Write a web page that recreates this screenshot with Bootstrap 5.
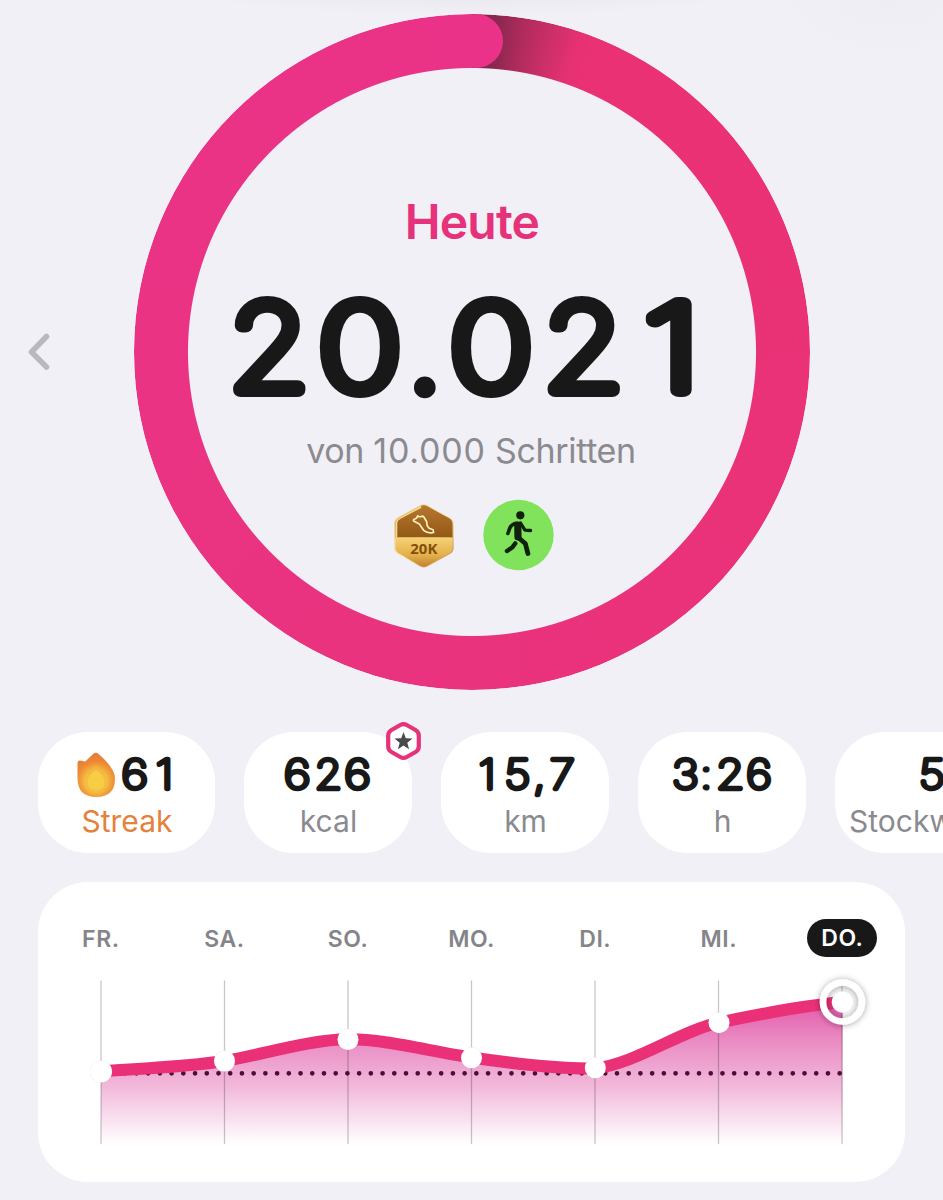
<!DOCTYPE html>
<html lang="de">
<head>
<meta charset="utf-8">
<meta name="viewport" content="width=device-width, initial-scale=1">
<title>Schritte</title>
<link href="https://cdn.jsdelivr.net/npm/bootstrap@5.3.0/dist/css/bootstrap.min.css" rel="stylesheet">
<style>
  body{background:#f1f0f6;font-family:Inter,"Liberation Sans",sans-serif;width:943px;height:1200px;overflow:hidden;color:#181818}
  svg{display:block;overflow:visible}
  .hero{height:718px;background:radial-gradient(ellipse 300px 28px at 470px -12px,rgba(0,0,0,.045),transparent),radial-gradient(ellipse 120px 60px at 890px 0,rgba(0,0,0,.012),transparent)}
  .prev{width:134px;padding-left:27px;padding-top:333px}
  .goal-ring{width:676px;height:676px;margin-top:14px}
  .ring-track{border-radius:50%;
    background:conic-gradient(#7d2449 0deg,#8f2852 5deg,#b02b5c 9deg,#cc2f68 14deg,#e63172 19deg,#ea3173 22deg,#ea3279 120deg,#ea3380 220deg,#ea3388 360deg);
    -webkit-mask:radial-gradient(circle,transparent 283.5px,#000 284.5px);mask:radial-gradient(circle,transparent 283.5px,#000 284.5px)}
  .ring-cap{width:54px;height:54px;left:315px;top:0;background:#ea3388}
  .today{font-size:48px;line-height:58px;font-weight:600;color:#e6327a;margin-top:179px;letter-spacing:-.8px}
  .goal-text{font-size:34px;line-height:42px;color:#8a8a8f;margin-top:26px;padding-right:2px;letter-spacing:-.35px}
  .goal-text span{letter-spacing:.8px}
  .awards{gap:28px;margin:28px 0 0 3px}
  .digits{fill:#181818;stroke:#181818;stroke-linejoin:round;stroke-linecap:round;font-family:Inter,sans-serif;font-weight:100}
  .dots{font-weight:200}
  .stats{gap:29px;padding-left:38px;padding-top:14px;overflow:hidden}
  .stat{width:168px;height:121px;border-radius:50px;background:#fff;flex:none}
  .stat-first{width:177px}
  .stat-label{font-size:30px;line-height:36px;color:#8a8a8f;margin-top:1px;padding-left:1px}
  .streak{color:#e4813a}
  .pin{left:141px;top:-10px}
  .week{width:867px;height:300px;border-radius:50px;background:#fff;margin:29px 0 0 38px;padding-top:37px}
  .day{width:123.6px;flex:none;text-align:center;font-size:23px;line-height:40px;font-weight:600;color:#858589;letter-spacing:.5px}
  .days{height:39px;padding-left:1px}
  .day-on{width:70px;height:38px;line-height:39px;margin:0 auto;background:#181818;color:#fff;border-radius:19px}
</style>
</head>
<body>
<header class="hero d-flex">
  <div class="prev">
    <svg width="24" height="38" viewBox="0 0 24 38"><path d="M19.500 3.500 4.500 19l15 15" fill="none" stroke="#b9b8be" stroke-width="5.500" stroke-linecap="round" stroke-linejoin="round"/></svg>
  </div>
  <div class="goal-ring position-relative d-flex flex-column align-items-center">
    <div class="ring-track position-absolute top-0 start-0 w-100 h-100"></div>
    <div class="ring-cap position-absolute rounded-circle"></div>
    <div class="today">Heute</div>
    <svg width="480" height="149" viewBox="232 255 480 149" class="mt-1">
      <g class="digits" font-size="118" stroke-width="14">
        <text y="390.300" x="208" transform="scale(1.1,1)">2</text>
        <text y="390.300" x="265" transform="scale(1.2,1)">0</text>
        <text y="391.200" x="408.500" class="dots" stroke-width="12.500">.</text>
        <text y="390.300" x="374.300" transform="scale(1.2,1)">0</text>
        <text y="390.300" x="493.900" transform="scale(1.1,1)">2</text>
        <text y="390.300" x="499.200" transform="scale(1.29,1)">1</text>
      </g>
    </svg>
    <div class="goal-text">von <span>10.000</span> Schritten</div>
    <div class="awards d-flex align-items-center">
      <svg width="62" height="64" viewBox="394 504 62 64">
        <defs>
          <linearGradient id="rim" x2="1" y2="1"><stop offset="0" stop-color="#e6b653"/><stop offset=".5" stop-color="#fff0ba"/><stop offset="1" stop-color="#bd792a"/></linearGradient>
          <linearGradient id="brown" x2="0" y2="1"><stop offset="0" stop-color="#b87932"/><stop offset="1" stop-color="#925815"/></linearGradient>
          <linearGradient id="gold" x2="0" y2="1"><stop offset="0" stop-color="#f5d275"/><stop offset=".55" stop-color="#e4b14b"/><stop offset="1" stop-color="#bd7a2c"/></linearGradient>
          <clipPath id="hex"><path d="M421 506.300q3.700-1.900 7.400 0l21.500 11.700q3.600 2 3.600 6v23.500q0 4-3.600 6l-21.500 12.200q-3.700 2-7.400 0L400 553.500q-3.500-2-3.500-6V524q0-4 3.500-6z"/></clipPath>
        </defs>
        <path d="M421 505.300q3.700-1.900 7.400 0l22.500 12.200q3.700 2 3.700 6v24.500q0 4-3.700 6l-22.500 12.500q-3.700 2-7.400 0L399 554q-3.700-2-3.700-6v-24.500q0-4 3.700-6z" fill="url(#rim)"/>
        <g clip-path="url(#hex)"><path d="M396 504h60v33.500h-60z" fill="url(#brown)"/><path d="M396 537.500h60V569h-60z" fill="url(#gold)"/><path d="M397 537.500v-14q0-4 4-6l21-11" fill="none" stroke="#f6da91" stroke-width="2.600"/></g>
        <path d="M415.500 519q2 .2 3.200-3.200 1.800 1.800 4.800.2l1.500 1.200 2.600 4.300.5 4 2 2.700 4 1.600.5 2.700q-5.600 1.300-10-2.200l-4.300-6.200-5.600-3q-.7-1.500.8-2.100z" fill="none" stroke="#fff1ba" stroke-width="1.700" stroke-linejoin="round"/>
        <text x="424.800" y="554" text-anchor="middle" font-family="Open Sans,sans-serif" font-weight="700" font-size="13.500" textLength="27" lengthAdjust="spacingAndGlyphs" fill="#82500c">20K</text>
      </svg>
      <svg width="71" height="71" viewBox="483 500 71 71">
        <circle cx="518.500" cy="535" r="35.200" fill="#80e35b"/>
        <g fill="none" stroke="#10210b" stroke-linecap="round" stroke-linejoin="round">
          <circle cx="520.300" cy="515.300" r="4.100" fill="#10210b" stroke="none"/>
          <path d="M517.800 525 518 537" stroke-width="7.200"/>
          <path d="M516 523.300q-5 1.500-6.300 5l-1.800 5.200" stroke-width="3.600"/>
          <path d="M520.500 523l4.500 7.200 5.600.3" stroke-width="3.300"/>
          <path d="M518.800 538l6.500 5.500 2.600 10" stroke-width="4.800"/>
          <path d="M515.200 543.500l-3 4-5.200 3.500" stroke-width="4.500"/>
        </g>
      </svg>
    </div>
  </div>
</header>

<section class="stats d-flex">
  <div class="stat stat-first d-flex flex-column align-items-center">
    <svg width="177" height="70" viewBox="38 732 177 70">
      <defs><radialGradient id="fire" gradientUnits="userSpaceOnUse" cx="96" cy="781" r="27"><stop offset=".3" stop-color="#f8cd45"/><stop offset=".42" stop-color="#f5bd40"/><stop offset=".5" stop-color="#f2ab3c"/><stop offset=".6" stop-color="#f09b39"/><stop offset=".72" stop-color="#ec8935"/><stop offset="1" stop-color="#e87b35"/></radialGradient></defs>
      <path d="M77.500 763q0-2.500 2.500-2.400l5.200 1 8.500-8q2.400-1.700 4.600.2Q115 768 115 778.500 115 797 96.300 797 77.500 797 77.500 778z" fill="url(#fire)"/>
      <path d="M96 765q10.500 7 10.500 16.500 0 10-10.500 10t-10.500-10q0-9.500 10.500-16.500z" fill="#f4b53f" opacity=".6"/><path d="M96 770q8.500 6 8.500 12.500 0 7.500-8.500 7.500t-8.500-7.500q0-6.500 8.500-12.500z" fill="#f8cd46"/>
      <g class="digits" font-size="41" stroke-width="4.500" transform="scale(1.16,1)"><text y="789" x="104.500 134.300">61</text></g>
    </svg>
    <div class="stat-label streak">Streak</div>
  </div>
  <div class="stat position-relative d-flex flex-column align-items-center">
    <svg width="168" height="70" viewBox="244.500 732 168 70"><g class="digits" font-size="41" stroke-width="4.500" transform="scale(1.16,1)"><text y="789" x="245">6</text><text y="789" x="297">6</text></g><g class="digits" font-size="41" stroke-width="4.700" transform="scale(1.07,1)"><text y="789" x="294.600">2</text></g></svg>
    <div class="stat-label">kcal</div>
    <svg class="pin position-absolute" width="37" height="38" viewBox="0 0 37 38">
      <path d="M15.300 3q3.200-1.800 6.400 0l8.800 5q3.300 2 3.300 5.500v11q0 3.500-3.300 5.500l-8.800 5q-3.200 1.800-6.400 0l-8.800-5q-3.300-2-3.300-5.500v-11Q3.200 10 6.500 8z" fill="#fff" stroke="#e6327a" stroke-width="4.200"/>
      <path d="m18.500 10 2.300 6.300 6.700.3-5.200 4.200 1.800 6.500-5.600-3.700-5.600 3.700 1.800-6.500-5.200-4.200 6.700-.3z" fill="#4a4a4c"/>
    </svg>
  </div>
  <div class="stat d-flex flex-column align-items-center">
    <svg width="168" height="70" viewBox="441.500 732 168 70"><g class="digits" font-size="41" stroke-width="4.500" transform="scale(1.12,1)"><text y="789" x="427.900 451 476.500 491.200">15,7</text></g></svg>
    <div class="stat-label">km</div>
  </div>
  <div class="stat d-flex flex-column align-items-center">
    <svg width="168" height="70" viewBox="638.500 732 168 70"><g class="digits" font-size="41" stroke-width="4.500" transform="scale(1.12,1)"><text y="789" x="600.500 625.300 639.800 666.500">3<tspan class="dots" stroke-width="3">:</tspan>26</text></g></svg>
    <div class="stat-label">h</div>
  </div>
  <div class="stat stat-first">
    <svg width="177" height="70" viewBox="835.500 732 177 70"><g class="digits" font-size="41" stroke-width="4.500" transform="scale(1.12,1)"><text y="789" x="821">5</text></g></svg>
    <div class="stat-label" style="padding-left:14px">Stockwerke</div>
  </div>
</section>

<section class="week">
  <div class="days d-flex">
    <div class="day">FR.</div><div class="day">SA.</div><div class="day">SO.</div><div class="day">MO.</div><div class="day">DI.</div><div class="day">MI.</div><div class="day"><div class="day-on">DO.</div></div>
  </div>
  <svg width="867" height="200" viewBox="38 958 867 200">
    <defs>
      <linearGradient id="area" gradientUnits="userSpaceOnUse" x1="0" y1="1001" x2="0" y2="1144"><stop offset="0" stop-color="#e558ab"/><stop offset=".3" stop-color="#ea8fc5"/><stop offset=".6" stop-color="#f2b9da"/><stop offset="1" stop-color="#fff"/></linearGradient>
      <filter id="glow" x="-50%" y="-50%" width="200%" height="200%"><feDropShadow dx="0" dy="0.500" stdDeviation="3.200" flood-color="#000" flood-opacity=".38"/></filter>
      <filter id="soft" x="-30%" y="-30%" width="160%" height="160%"><feDropShadow dx="0" dy="0" stdDeviation=".7" flood-color="#000" flood-opacity=".4"/></filter>
      <clipPath id="plot"><path d="M101 970h741.500v180H101z"/></clipPath>
    </defs>
    <g clip-path="url(#plot)">
      <path d="M101 1071.300C142 1068.500 190 1066.500 224.500 1061S310 1039.500 348 1039.300 430 1051.500 471.500 1057.500 560 1069.500 595.500 1068.300C635 1064 680 1031 719 1022.700S800 1006 843 1002V1144H101z" fill="url(#area)"/>
    </g>
    <path d="M101 980.500V1144M224.500 980.500V1144M348 980.500V1144M471.500 980.500V1144M595 980.500V1144M718.500 980.500V1144M842 980.500V1144" stroke="#000" stroke-opacity=".22" stroke-width="1.300"/>
    <path d="M101.300 1073.300H840" fill="none" stroke="#4a0d33" stroke-width="4.700" stroke-linecap="round" stroke-dasharray="0 11.720"/>
    <path clip-path="url(#plot)" d="M101 1071.300C142 1068.500 190 1066.500 224.500 1061S310 1039.500 348 1039.300 430 1051.500 471.500 1057.500 560 1069.500 595.500 1068.300C635 1064 680 1031 719 1022.700S800 1006 843 1002" fill="none" stroke="#ea3177" stroke-width="12"/>
    <g fill="#fff" filter="url(#soft)"><circle cx="101" cy="1071.500" r="11"/><circle cx="224.500" cy="1061" r="10.500"/><circle cx="348" cy="1039.500" r="10.500"/><circle cx="471.500" cy="1057.800" r="10.500"/><circle cx="595.300" cy="1067.800" r="10.500"/><circle cx="719" cy="1022.700" r="10.500"/></g>
    <circle cx="842.500" cy="1002" r="15" fill="#000" fill-opacity=".04"/>
    <circle cx="842.500" cy="1002" r="19.500" fill="none" stroke="#fff" stroke-width="6.600" filter="url(#glow)"/>
    <circle cx="842.500" cy="1002" r="10.700" fill="#fff" filter="url(#soft)"/>
  </svg>
</section>
<script src="https://cdn.jsdelivr.net/npm/bootstrap@5.3.0/dist/js/bootstrap.bundle.min.js"></script>
</body>
</html>
